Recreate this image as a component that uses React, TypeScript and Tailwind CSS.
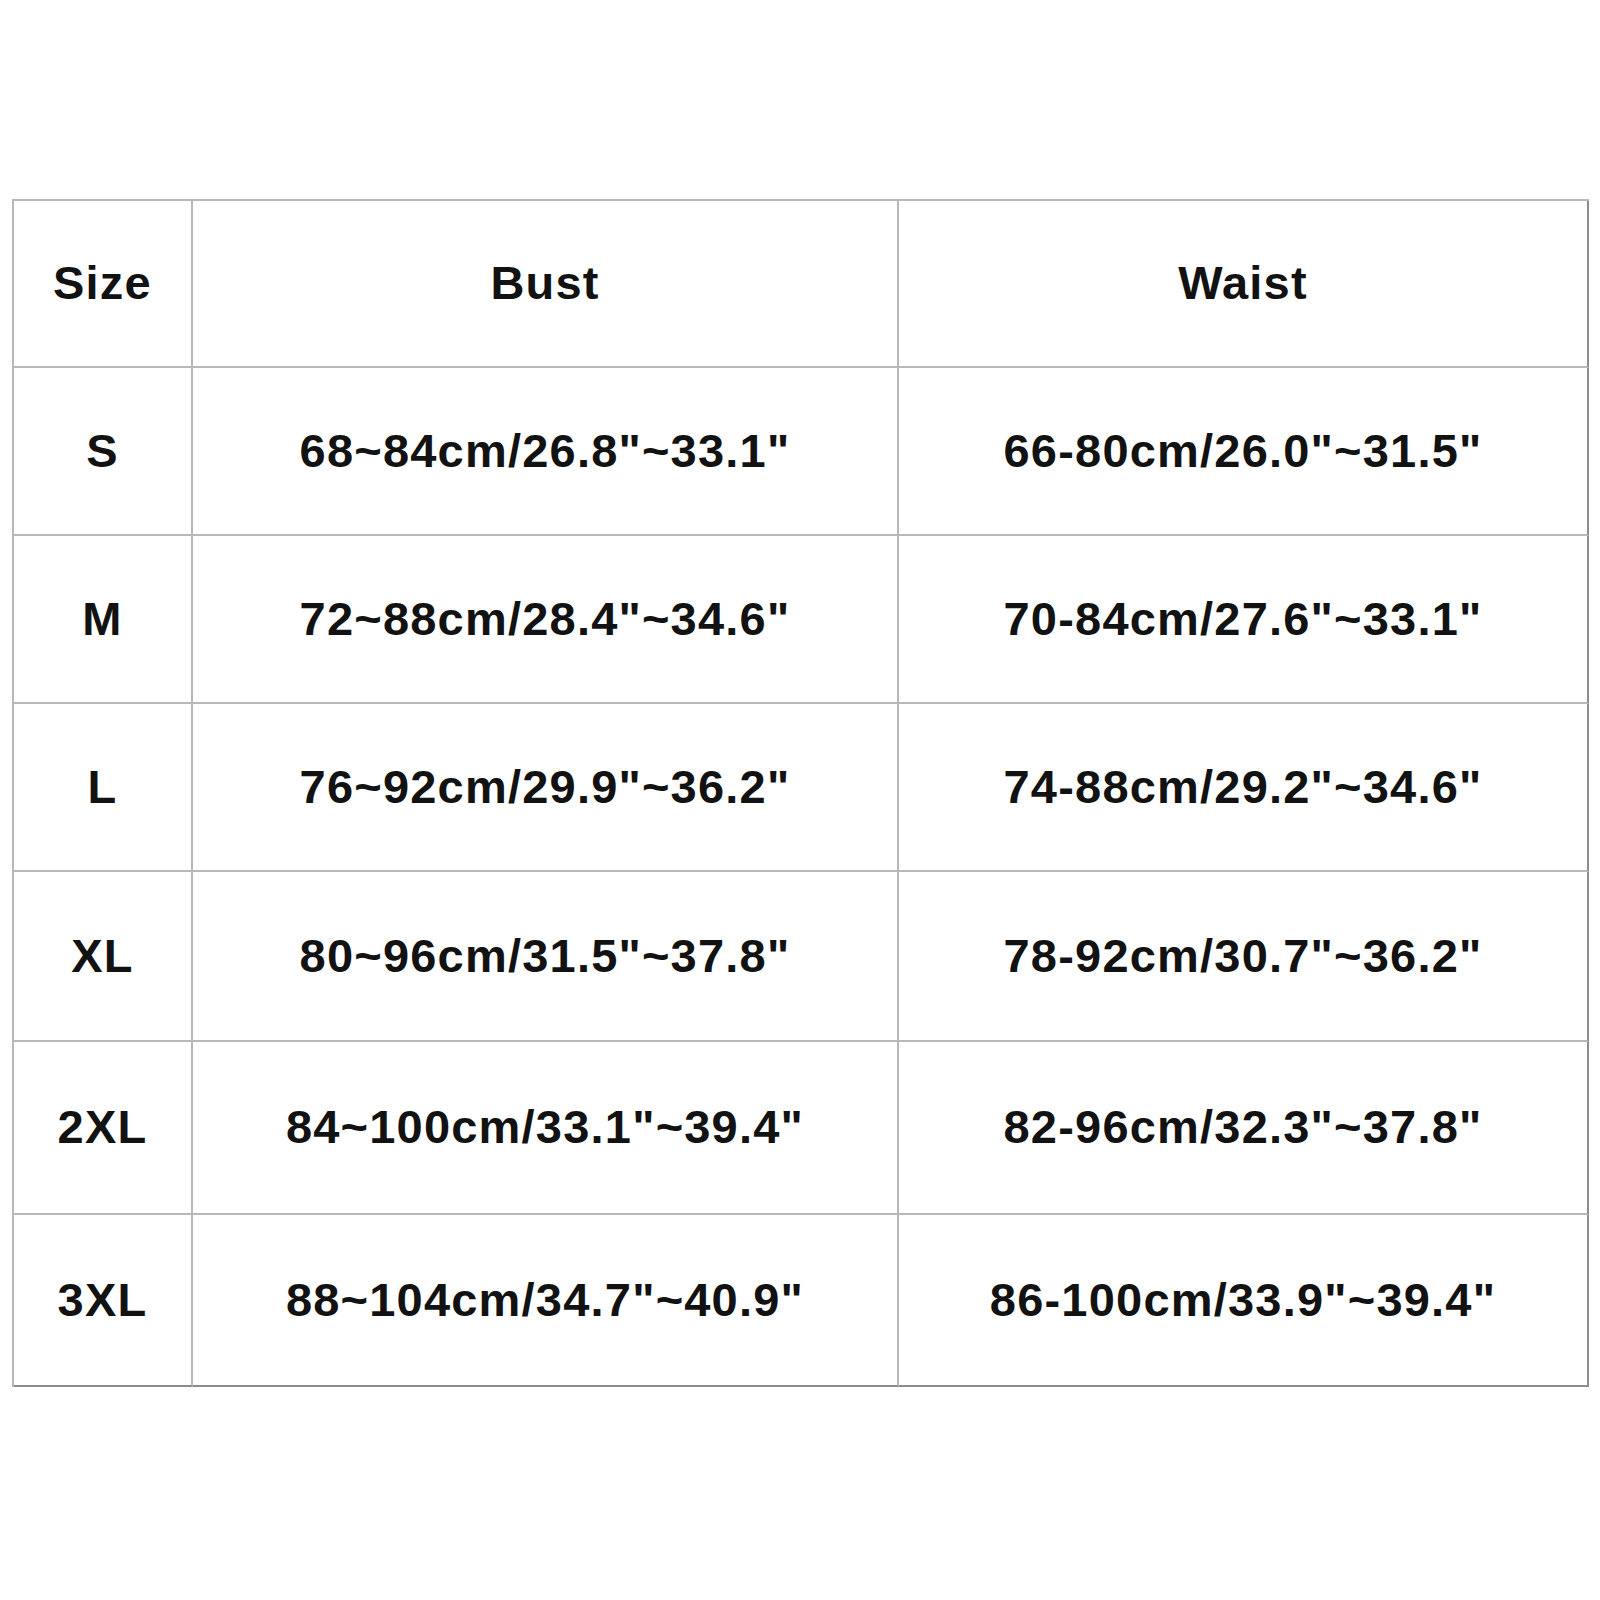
const rows = [
  { size: 'S', bust: '68~84cm/26.8"~33.1"', waist: '66-80cm/26.0"~31.5"', h: 'h-[168px]' },
  { size: 'M', bust: '72~88cm/28.4"~34.6"', waist: '70-84cm/27.6"~33.1"', h: 'h-[168px]' },
  { size: 'L', bust: '76~92cm/29.9"~36.2"', waist: '74-88cm/29.2"~34.6"', h: 'h-[168px]' },
  { size: 'XL', bust: '80~96cm/31.5"~37.8"', waist: '78-92cm/30.7"~36.2"', h: 'h-[170px]' },
  { size: '2XL', bust: '84~100cm/33.1"~39.4"', waist: '82-96cm/32.3"~37.8"', h: 'h-[173px]' },
  { size: '3XL', bust: '88~104cm/34.7"~40.9"', waist: '86-100cm/33.9"~39.4"', h: 'h-[172px]' },
];

function Cell({ children, last, bottom, h }: { children: React.ReactNode; last?: boolean; bottom?: boolean; h: string }) {
  return (
    <div
      className={`${h} flex items-center justify-center border-b-2 border-r-2 ${
        last ? 'border-r-[#8c8c8c]' : 'border-r-[#b8b8b8]'
      } ${bottom ? 'border-b-[#8c8c8c]' : 'border-b-[#b8b8b8]'}`}
    >
      {children}
    </div>
  );
}

export default function App() {
  return (
    <div className="w-[1600px] h-[1600px] bg-white pt-[199px] pl-[12px]">
      <div
        className="w-[1577px] grid grid-cols-[179px_706px_690px] border-l-2 border-t-2 border-[#b8b8b8] text-[47px] font-bold text-[#121212] tracking-[1.2px]"
        style={{ fontFamily: '"Liberation Sans", Arial, sans-serif' }}
      >
        <Cell h="h-[167px]">Size</Cell>
        <Cell h="h-[167px]">Bust</Cell>
        <Cell h="h-[167px]" last>Waist</Cell>
        {rows.map((r, i) => {
          const bottom = i === rows.length - 1;
          return [
            <Cell key={r.size + 'a'} h={r.h} bottom={bottom}>{r.size}</Cell>,
            <Cell key={r.size + 'b'} h={r.h} bottom={bottom}>{r.bust}</Cell>,
            <Cell key={r.size + 'c'} h={r.h} bottom={bottom} last>{r.waist}</Cell>,
          ];
        })}
      </div>
    </div>
  );
}
